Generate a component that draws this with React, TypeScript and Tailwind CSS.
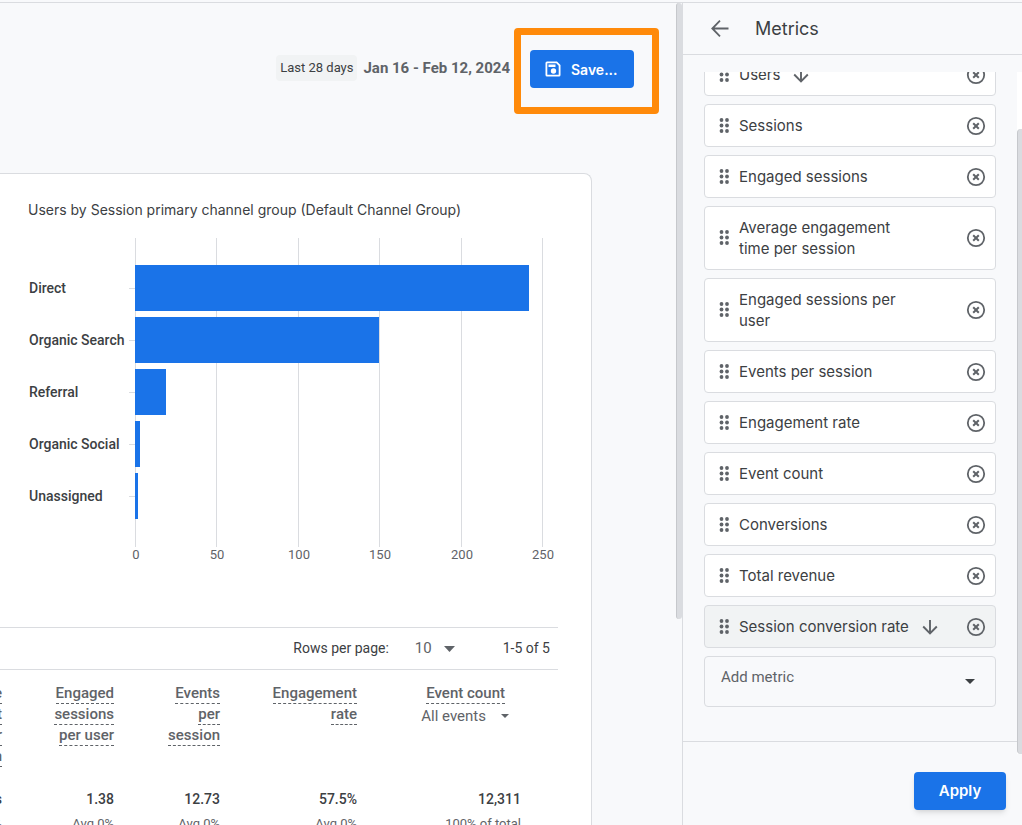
import React from "react";

const DISPLAY = "font-['Google_Sans',Inter,Roboto,sans-serif]";

type Metric = { name: string; sorted?: boolean; selected?: boolean };

const metrics: Metric[] = [
  { name: "Users", sorted: true },
  { name: "Sessions" },
  { name: "Engaged sessions" },
  { name: "Average engagement time per session" },
  { name: "Engaged sessions per user" },
  { name: "Events per session" },
  { name: "Engagement rate" },
  { name: "Event count" },
  { name: "Conversions" },
  { name: "Total revenue" },
  { name: "Session conversion rate", sorted: true, selected: true },
];

const channels = [
  { name: "Direct", width: 394 },
  { name: "Organic Search", width: 244 },
  { name: "Referral", width: 31 },
  { name: "Organic Social", width: 5 },
  { name: "Unassigned", width: 3 },
];

const ticks = [
  { label: "0", x: 107 },
  { label: "50", x: 188 },
  { label: "100", x: 270 },
  { label: "150", x: 351 },
  { label: "200", x: 433 },
  { label: "250", x: 514 },
];

const columns = [
  { lines: ["Average", "engagement", "time per", "session"], value: "1m 12s", note: "Avg 0%" },
  { lines: ["Engaged", "sessions", "per user"], value: "1.38", note: "Avg 0%" },
  { lines: ["Events", "per", "session"], value: "12.73", note: "Avg 0%" },
  { lines: ["Engagement", "rate"], value: "57.5%", note: "Avg 0%" },
];

function DragHandle() {
  return (
    <svg className="h-4 w-3 shrink-0" viewBox="0 0 12 16" fill="#5f6368" aria-hidden="true">
      {[2, 7.5, 13].map((y) => (
        <g key={y}>
          <circle cx="2.5" cy={y} r="1.9" />
          <circle cx="8" cy={y} r="1.9" />
        </g>
      ))}
    </svg>
  );
}

function RemoveIcon() {
  return (
    <svg className="size-5" viewBox="0 0 20 20" fill="none" stroke="#5f6368" strokeWidth="1.8" aria-hidden="true">
      <circle cx="10" cy="10" r="8.2" />
      <path d="M7.200 7.200l5.600 5.600M12.800 7.200l-5.600 5.600" strokeWidth="2" />
    </svg>
  );
}

function ArrowDown() {
  return (
    <svg className="size-4 shrink-0" viewBox="0 0 16 16" fill="none" stroke="#5f6368" strokeWidth="1.9" aria-hidden="true">
      <path d="M8 1v13M1.2 7.500L8 14.300l6.800-6.800" />
    </svg>
  );
}

function SaveIcon() {
  return (
    <svg className="size-4" viewBox="0 0 16 16" aria-hidden="true">
      <path
        fill="#fff"
        fillRule="evenodd"
        d="M2 .5H12L15.500 4V14a1.500 1.500 0 0 1-1.500 1.500H2A1.500 1.500 0 0 1 .5 14V2A1.500 1.500 0 0 1 2 .5ZM2.300 2.300V13.700H13.700V4.700L11.300 2.300Z"
      />
      <path fill="#fff" d="M3.500 3.500H10.500V6H3.500Z" />
      <circle cx="8.500" cy="10" r="2.700" fill="#fff" />
    </svg>
  );
}

function MetricRow({ metric }: { metric: Metric }) {
  return (
    <li
      className={`flex items-center rounded border border-[#dadce0] py-[10px] pr-[9px] pl-[14px] ${
        metric.selected ? "bg-[#f1f3f4]" : "bg-white"
      }`}
    >
      <DragHandle />
      <span className="ml-2 flex items-center gap-[13px]">
        <span className="max-w-[175px] text-[15px] leading-[21px] text-[#3c4043]">{metric.name}</span>
        {metric.sorted && <ArrowDown />}
      </span>
      <button type="button" aria-label={`Remove ${metric.name}`} className="ml-auto">
        <RemoveIcon />
      </button>
    </li>
  );
}

function Chart() {
  return (
    <svg className="mt-[18px] ml-[28px] block h-[326px] w-[540px]" viewBox="0 0 540 326" role="img" aria-label="Users by channel group">
      {ticks.map((t) => (
        <g key={t.label}>
          <path d={`M${t.x + 0.5} 0V309`} stroke="#dadce0" />
          <text x={t.x + 1} y="321" textAnchor="middle" className="fill-[#5f6368] font-[Roboto] text-[13px]">
            {t.label}
          </text>
        </g>
      ))}
      {channels.map((c, i) => (
        <g key={c.name}>
          <text x="1" y={55 + i * 52} className="fill-[#3c4043] font-[Roboto] text-[14px] font-medium">
            {c.name}
          </text>
          <path d={`M101 ${50.5 + i * 52}h6`} stroke="#dadce0" />
          <rect x="107" y={27 + i * 52} width={c.width} height="46" fill="#1a73e8" />
        </g>
      ))}
    </svg>
  );
}

function HeaderLine({ children }: { children: React.ReactNode }) {
  return (
    <span className="mb-px block w-fit border-b border-dashed border-[#5f6368] pb-px leading-[18px] whitespace-nowrap">
      {children}
    </span>
  );
}

function ReportTable() {
  return (
    <table className="w-[558px] table-fixed text-right font-[Roboto] text-[#5f6368]">
      <colgroup>
        <col className="w-[2px]" />
        <col className="w-[112px]" />
        <col className="w-[106px]" />
        <col className="w-[137px]" />
        <col className="w-[164px]" />
        <col />
      </colgroup>
      <thead>
        <tr className="h-[111px] align-top text-[15px]">
          {columns.map((c) => (
            <th key={c.lines.join(" ")} scope="col" className="pt-[14px] font-medium">
              <span className="flex flex-col items-end">
                {c.lines.map((l) => (
                  <HeaderLine key={l}>{l}</HeaderLine>
                ))}
              </span>
            </th>
          ))}
          <th scope="col" className="pt-[14px] pr-4 font-medium">
            <span className="flex flex-col items-end">
              <HeaderLine>Event count</HeaderLine>
            </span>
            <button type="button" className="flex w-full items-center justify-end gap-[15px] leading-[22px] font-normal">
              <span>All events</span>
              <svg className="-mr-1 h-1 w-2" viewBox="0 0 8 4" fill="#5f6368" aria-hidden="true">
                <path d="M0 0h8L4 4z" />
              </svg>
            </button>
          </th>
          <th />
        </tr>
      </thead>
      <tbody>
        <tr className="align-top whitespace-nowrap">
          {[...columns, { lines: ["Event count"], value: "12,311", note: "100% of total" }].map((c) => (
            <td key={c.lines.join(" ")} className="pt-2">
              <span className="flex flex-col items-end">
                <span className="text-[14px] leading-5 font-medium text-[#3c4043]">{c.value}</span>
                <span className="mt-[5px] text-[13px] leading-5">{c.note}</span>
              </span>
            </td>
          ))}
          <td />
        </tr>
      </tbody>
    </table>
  );
}

export default function App() {
  return (
    <div className="flex h-screen overflow-hidden bg-[#f8f9fb] pt-[2px] font-[Roboto] text-[#3c4043]">
      <main className="flex min-w-0 flex-1 overflow-hidden border-t border-[#dadce0]">
        <div className="flex min-w-0 flex-1 flex-col">
          <header className="flex h-[170px] shrink-0 items-start justify-end pt-[25px] pr-[17px]">
            <div className="mt-[27px] flex items-center gap-[6px]">
              <span className="rounded-sm bg-[#f1f3f4] px-1 text-[13px] leading-[26px]">Last 28 days</span>
              <span className="text-[15px] leading-[26px] font-bold text-[#5f6368]">Jan 16 - Feb 12, 2024</span>
            </div>
            <div className="ml-1 flex h-[86px] w-[145px] items-start rounded border-[7px] border-[#ff8a0a] pt-[15px] pl-[9px]">
              <button
                type="button"
                className={`flex h-[38px] w-[104px] items-center gap-[10px] rounded bg-[#1a73e8] pl-[15px] text-[14px] font-semibold text-white ${DISPLAY}`}
              >
                <SaveIcon />
                Save...
              </button>
            </div>
          </header>
          <section className="mr-[84px] flex-1 overflow-hidden rounded-tr-lg border-t border-r border-[#dadce0] bg-white">
            <h2 className={`mt-[26px] ml-[28px] text-[14px] leading-5 ${DISPLAY}`}>
              Users by Session primary channel group (Default Channel Group)
            </h2>
            <Chart />
            <div className="mt-[63px] mr-[33px] flex h-[43px] items-center justify-end border-y border-[#dadce0] pr-2 text-[14px]">
              <span>Rows per page:</span>
              <button type="button" aria-label="Rows per page" className="ml-[26px] flex items-center gap-3 text-[15px] text-[#5f6368]">
                10
                <svg className="h-[6px] w-[11px]" viewBox="0 0 11 6" fill="#5f6368" aria-hidden="true">
                  <path d="M0 0h11L5.500 6z" />
                </svg>
              </button>
              <span className="ml-12">1-5 of 5</span>
            </div>
            <ReportTable />
          </section>
        </div>
        <div className="h-[616px] w-[6px] shrink-0 rounded border-l border-[#c6c8cc] bg-[#dadce0]" />
      </main>

      <aside className={`flex w-[340px] shrink-0 flex-col border-t border-l border-[#dadce0] ${DISPLAY}`}>
        <header className="flex h-[52px] shrink-0 items-center border-b border-[#dadce0] pl-7">
          <button type="button" aria-label="Back">
            <svg className="size-[18px]" viewBox="0 0 18 18" fill="none" stroke="#5f6368" strokeWidth="1.8" aria-hidden="true">
              <path d="M17.500 8.500H1.500M9 .7L1.300 8.500L9 16.300" />
            </svg>
          </button>
          <h1 className="ml-[26px] text-[18px]">Metrics</h1>
        </header>
        <div className="mt-[17px] flex min-h-0 flex-1">
          <div className="flex min-w-0 flex-1 flex-col justify-end overflow-hidden border-b border-[#dadce0] pr-[21px] pb-[34px] pl-[21px]">
            <ul className="flex flex-col gap-2">
              {metrics.map((m) => (
                <MetricRow key={m.name} metric={m} />
              ))}
            </ul>
            <button
              type="button"
              className="mt-2 flex h-[51px] shrink-0 items-center justify-between rounded border border-[#dadce0] pr-5 pb-2 pl-4 font-[Roboto] text-[15px] text-[#5f6368]"
            >
              Add metric
              <svg className="mt-2 h-[5px] w-[10px]" viewBox="0 0 10 5" fill="#3c4043" aria-hidden="true">
                <path d="M0 0h10L5 5z" />
              </svg>
            </button>
          </div>
          <div className="-mb-3 flex w-[5px] flex-col bg-white pt-[57px]">
            <div className="flex-1 rounded-l border-l border-[#c6c8cc] bg-[#dadce0]" />
          </div>
        </div>
        <footer className="flex h-[83px] shrink-0 items-start justify-end pt-[30px] pr-4">
          <button type="button" className="h-[38px] w-[92px] rounded bg-[#1a73e8] text-[15px] font-semibold text-white shadow-md">
            Apply
          </button>
        </footer>
      </aside>
    </div>
  );
}
